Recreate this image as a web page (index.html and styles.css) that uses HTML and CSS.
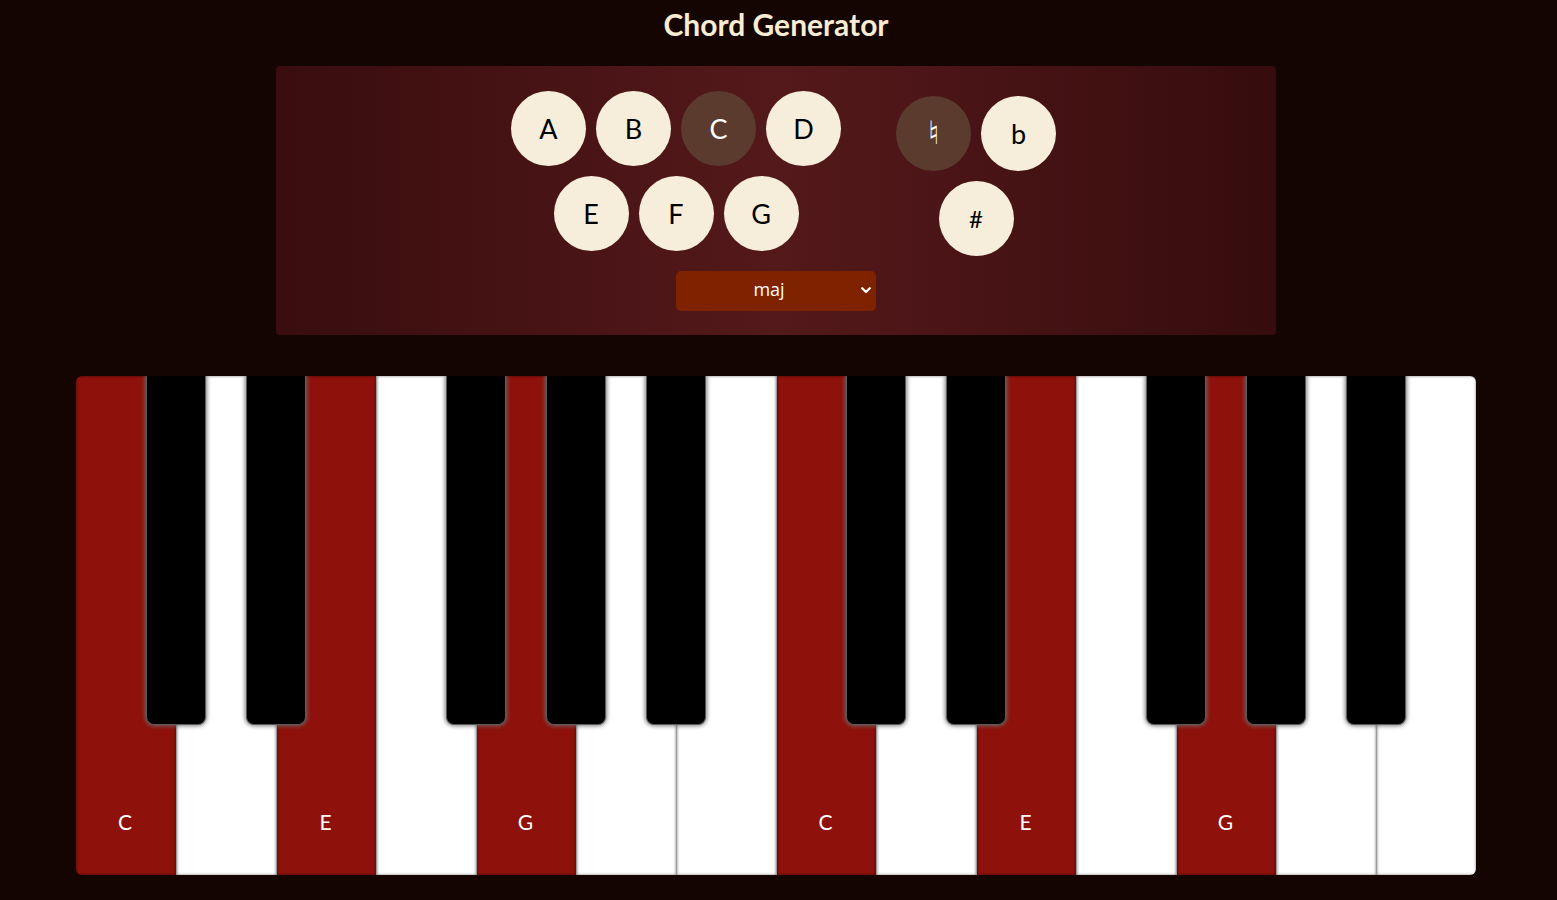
FILE: index.html
```html
<!DOCTYPE html>
<html>
<head>
<meta charset="utf-8">
<title>Chord Generator</title>
<link rel="stylesheet" href="styles.css">
</head>
<body>
<h1 class="title">Chord Generator</h1>
<section class="panel">
  <div class="controls">
    <div class="notes">
      <button class="circle">A</button>
      <button class="circle">B</button>
      <button class="circle active">C</button>
      <button class="circle">D</button>
      <button class="circle">E</button>
      <button class="circle">F</button>
      <button class="circle">G</button>
    </div>
    <div class="accidentals">
      <button class="circle active natural">♮</button>
      <button class="circle">b</button>
      <button class="circle sharp">#</button>
    </div>
  </div>
  <div class="select-wrap">
    <select class="quality">
      <option>maj</option>
      <option>min</option>
      <option>dim</option>
      <option>aug</option>
    </select>
    <svg class="chev" width="10" height="7" viewBox="0 0 10 7"><path d="M1.2 1.2 L5 5 L8.8 1.2" fill="none" stroke="#fff" stroke-width="2.2" stroke-linecap="round" stroke-linejoin="round"/></svg>
  </div>
</section>
<section class="piano">
  <div class="key white on"><span>C</span></div>
  <div class="key white"></div>
  <div class="key white on"><span>E</span></div>
  <div class="key white"></div>
  <div class="key white on"><span>G</span></div>
  <div class="key white"></div>
  <div class="key white"></div>
  <div class="key white on"><span>C</span></div>
  <div class="key white"></div>
  <div class="key white on"><span>E</span></div>
  <div class="key white"></div>
  <div class="key white on"><span>G</span></div>
  <div class="key white"></div>
  <div class="key white"></div>
  <div class="black" style="left:70px"></div>
  <div class="black" style="left:170px"></div>
  <div class="black" style="left:370px"></div>
  <div class="black" style="left:470px"></div>
  <div class="black" style="left:570px"></div>
  <div class="black" style="left:770px"></div>
  <div class="black" style="left:870px"></div>
  <div class="black" style="left:1070px"></div>
  <div class="black" style="left:1170px"></div>
  <div class="black" style="left:1270px"></div>
</section>
</body>
</html>
```
FILE: styles.css
```css
html, body {
  background: #140500;
}
body {
  margin: 0 5px 0 0;
  font-family: Lato, "Open Sans", "DejaVu Sans", sans-serif;
}
.title {
  margin: 0;
  height: 66px;
  padding-top: 4px;
  box-sizing: border-box;
  text-align: center;
  color: #f8ecd4;
  font-family: Lato, "Open Sans", sans-serif;
  font-size: 30px;
  font-weight: 700;
  line-height: 40px;
}
.panel {
  width: 1000px;
  margin: 0 auto;
  box-sizing: border-box;
  padding: 25px 0 24px;
  border-radius: 4px;
  background: linear-gradient(to right, #390d0e 0%, #4c1517 35%, #54191a 50%, #4c1517 65%, #360c0d 100%);
}
.controls {
  display: flex;
  justify-content: center;
  align-items: flex-start;
  padding-left: 15px;
}
.notes {
  width: 330px;
  display: flex;
  flex-wrap: wrap;
  justify-content: center;
  align-content: flex-start;
  gap: 10px;
}
.accidentals {
  width: 160px;
  margin-left: 55px;
  margin-top: 5px;
  margin-bottom: -5px;
  display: flex;
  flex-wrap: wrap;
  justify-content: center;
  gap: 10px;
  align-content: flex-start;
}
.circle {
  width: 75px;
  height: 75px;
  border-radius: 50%;
  border: none;
  padding: 0;
  background: #f6eedb;
  color: #000;
  font-family: Lato, "Open Sans", "DejaVu Sans", sans-serif;
  font-size: 27px;
  line-height: 75px;
}
.circle.active {
  background: #5a3b2e;
  color: #fff;
}
.circle.natural {
  font-family: "DejaVu Sans", sans-serif;
  font-size: 32px;
}
.circle.sharp {
  font-size: 24px;
}
.select-wrap {
  position: relative;
  width: 200px;
  height: 40px;
  margin: 20px auto 0;
}
.quality {
  appearance: none;
  -webkit-appearance: none;
  display: block;
  width: 200px;
  height: 40px;
  border: none;
  border-radius: 5px;
  background: #7e2200;
  color: #fff;
  font-family: "Open Sans", sans-serif;
  font-size: 18px;
  text-align: center;
  text-align-last: center;
  padding: 0 14px 4px 0;
}
.chev {
  position: absolute;
  right: 5px;
  top: 16px;
  pointer-events: none;
}
.piano {
  position: relative;
  width: 1400px;
  height: 499px;
  margin: 41px auto 0;
  display: flex;
  border-radius: 6px;
  overflow: hidden;
}
.key.white {
  flex: 0 0 100px;
  box-sizing: border-box;
  background: #fff;
  border-left: 1px solid #9a9a9a;
  box-shadow: inset 0 0 3px rgba(0,0,0,0.55);
  display: flex;
  align-items: flex-end;
  justify-content: center;
  padding-bottom: 40px;
}
.key.white:first-child {
  border-left: none;
}
.key.white.on {
  background: #8e110b;
}
.key span {
  color: #fff;
  font-family: Lato, "Open Sans", sans-serif;
  font-size: 21px;
  line-height: 26px;
  margin-left: -2px;
}
.black {
  position: absolute;
  top: 0;
  width: 60px;
  height: 349px;
  box-sizing: border-box;
  background: #000;
  border: 1px solid #5a5a5a;
  border-top: none;
  border-radius: 0 0 8px 8px;
  box-shadow: 0 0 4px 1px rgba(110,110,110,0.9);
}
```
